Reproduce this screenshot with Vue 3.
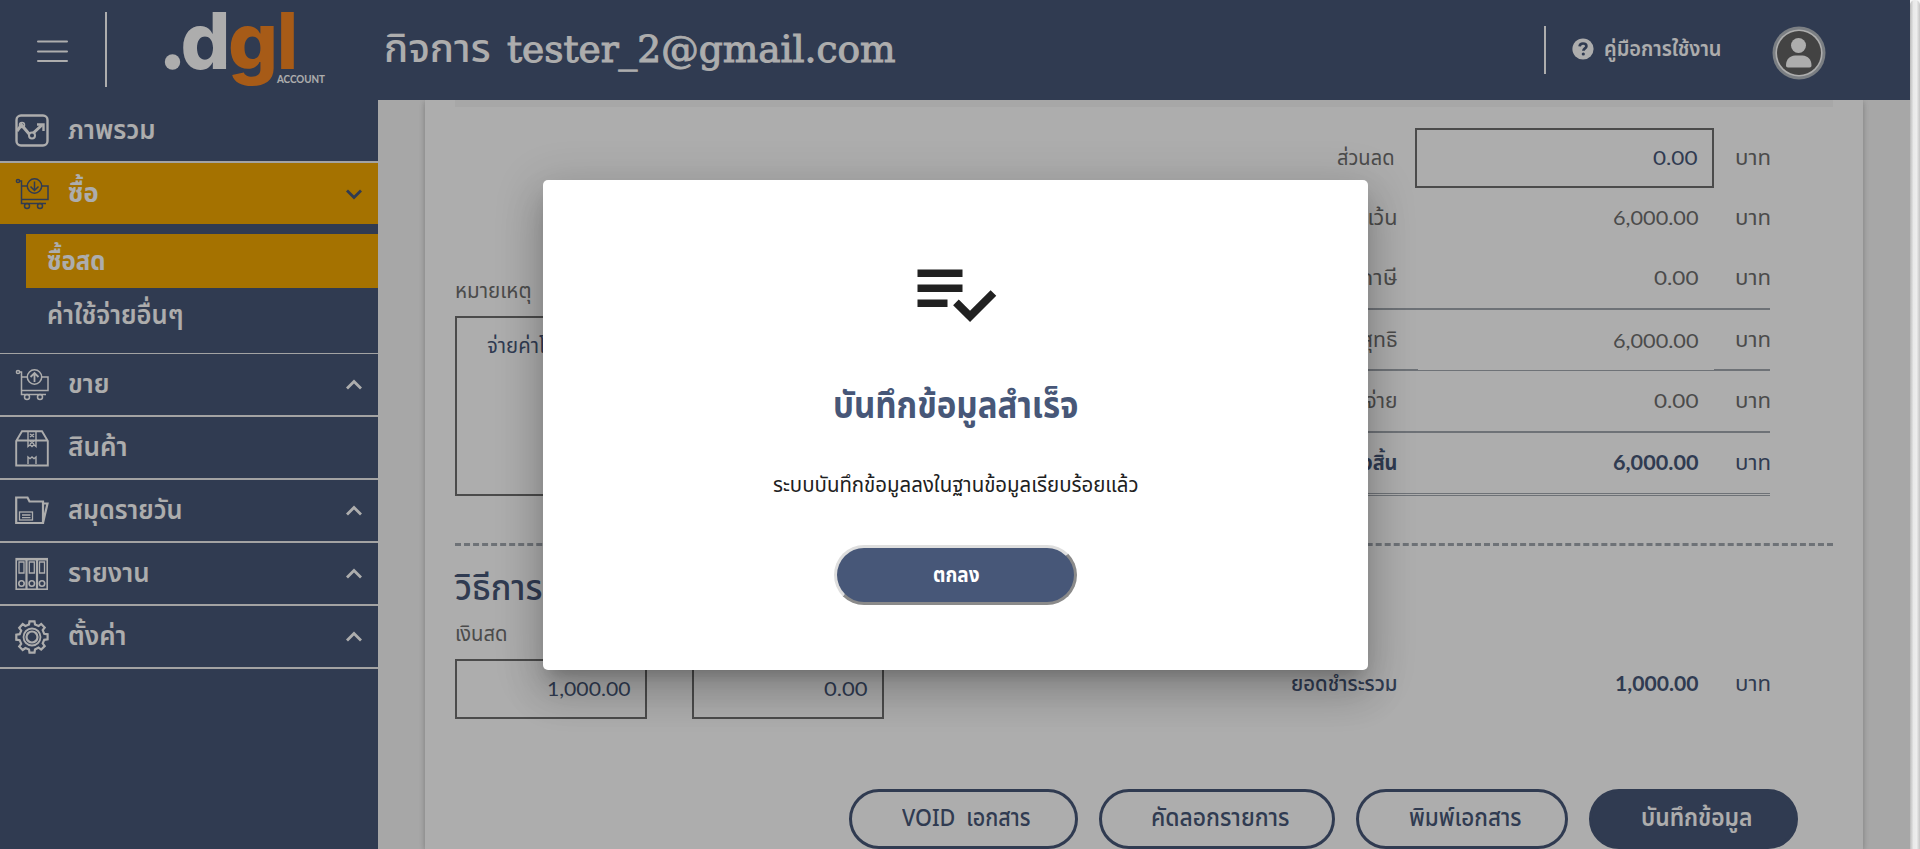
<script setup>
// Squeezes or stretches a one-line label to the width given in pixels.
const vFit = {
  mounted(el, { value }) {
    const inner = el.firstElementChild || el
    const natural = inner.getBoundingClientRect().width
    el.style.width = value + 'px'
    if (natural) inner.style.transform = `scaleX(${(value + 1.5) / natural})`
  },
}

const menu = [
  { label: 'ภาพรวม', width: 86, icon: 'chart' },
  { label: 'ซื้อ', width: 29, icon: 'buy', arrow: true, active: true, sub: [
    { label: 'ซื้อสด', width: 57, active: true },
    { label: 'ค่าใช้จ่ายอื่นๆ', width: 135 },
  ] },
  { label: 'ขาย', width: 40, icon: 'sell', arrow: true },
  { label: 'สินค้า', width: 58, icon: 'box' },
  { label: 'สมุดรายวัน', width: 113, icon: 'folder', arrow: true },
  { label: 'รายงาน', width: 80, icon: 'binder', arrow: true },
  { label: 'ตั้งค่า', width: 57, icon: 'gear', arrow: true },
]

const totals = [
  { label: 'มูลค่ายกเว้น', lw: 102, value: '6,000.00', vw: 84 },
  { label: 'มูลค่าภาษี', lw: 88, value: '0.00', vw: 43, line: 'full' },
  { label: 'ยอดสุทธิ', lw: 73, value: '6,000.00', vw: 84, line: 'step' },
  { label: 'หัก ณ ที่จ่าย', lw: 98, value: '0.00', vw: 43, line: 'full' },
  { label: 'รวมทั้งสิ้น', lw: 81, value: '6,000.00', vw: 84, line: 'double', strong: true },
]

const actions = [
  { label: 'VOID เอกสาร', width: 127, box: 'w1' },
  { label: 'คัดลอกรายการ', width: 137, box: 'w2' },
  { label: 'พิมพ์เอกสาร', width: 111, box: 'w3' },
  { label: 'บันทึกข้อมูล', width: 110, box: 'w4', solid: true },
]
</script>

<template>
  <div class="page">
    <header class="top">
      <svg class="burger" viewBox="0 0 32 24"><path d="M1 2.5H30M1 12.5H30M1 22H30" /></svg>
      <i class="bar tall"></i>
      <svg class="logo" viewBox="0 -8 170 100">
        <circle cx="12.5" cy="54" r="7.7" fill="#fff" />
        <text x="20.500" y="61" textLength="50" lengthAdjust="spacingAndGlyphs" fill="#fff">d</text>
        <text x="68" y="61" textLength="50" lengthAdjust="spacingAndGlyphs" fill="#f68622">g</text>
        <text x="117" y="61" textLength="21" lengthAdjust="spacingAndGlyphs" fill="#f68622">l</text>
        <text class="acc" x="117" y="74.5" textLength="48" lengthAdjust="spacingAndGlyphs" fill="#fff">ACCOUNT</text>
      </svg>
      <h1 class="company">
        <span class="fit" v-fit="105"><span>กิจการ</span></span>
        <span class="fit mail" v-fit="387"><span>tester_2@gmail.com</span></span>
      </h1>
      <i class="bar short"></i>
      <svg class="help" viewBox="0 0 22 22"><circle cx="11" cy="11" r="10.6" fill="#fff" /><path d="M7.6 8.4C7.8 6.4 9.2 5.500 11 5.500c2 0 3.400 1 3.400 2.700 0 2.300-3 2.200-3 4.600" fill="none" stroke="#475778" stroke-width="2.700" /><circle cx="11.300" cy="16" r="1.600" fill="#475778" /></svg>
      <span class="fit manual" v-fit="116"><span>คู่มือการใช้งาน</span></span>
      <svg class="avatar" viewBox="0 0 54 54">
        <circle cx="27" cy="27" r="26.5" fill="#b5bbc2" /><circle cx="27" cy="27" r="23.6" fill="#fff" /><circle cx="27" cy="27" r="22" fill="#636363" />
        <circle cx="26.5" cy="19.5" r="7.5" fill="#fff" /><path d="M14 39.5c0-6 3.500-9.500 9-10h7.500c5.500 .5 9 4 9 10 0 1-.7 2-2 2h-21.500c-1.300 0-2-1-2-2z" fill="#fff" />
      </svg>
    </header>

    <div class="body">
      <nav class="side">
        <div v-for="m in menu" :key="m.label" class="group" :class="{ open: m.sub }">
          <div class="item" :class="{ active: m.active }">
            <svg class="ico" viewBox="0 0 34 34">
              <g v-if="m.icon === 'chart'"><rect x="1.500" y="1.500" width="31" height="30" rx="4.500" stroke-width="2.400" /><path d="M2 17 6.500 11l9 10.500L27 11" stroke-width="3" /><path d="M22 10.500h6.500V17" stroke-width="2.400" /><circle cx="7" cy="11" r="2.500" stroke-width="1.500" /><circle cx="17" cy="21.500" r="3" class="hole" stroke-width="2" /></g>
              <g v-else-if="m.icon === 'buy' || m.icon === 'sell'" stroke-width="1.500">
                <circle cx="3" cy="4" r="1.600" /><path d="M4.500 4H6.500V26.500H31M6.500 9H12M26.500 9H33V22.500H6.500" />
                <circle cx="19.500" cy="9" r="7.200" /><path v-if="m.icon === 'buy'" d="M19.500 4.500V13M15.500 9.500l4 4 4-4" /><path v-else d="M19.500 14V5M15.500 9l4-4 4 4" stroke-width="1.800" />
                <circle cx="12" cy="29" r="2.500" /><circle cx="25" cy="29" r="2.500" />
              </g>
              <g v-else-if="m.icon === 'box'" stroke-width="1.900"><path d="M1.200 10 7 .2H27L32.800 10V34.500H1.200zM1.200 9.500H32.800" /><path d="M13 1V15.500l2-1.700 2 1.700 2-1.700 2 1.700V1M13 33V26l2 1.700 2-1.700 2 1.700 2-1.700V33M15 3l4 3M15 6l4-3M15 10l4 3M15 13l4-3" stroke-width="1.400" /></g>
              <g v-else-if="m.icon === 'folder'" stroke-width="2.200"><path d="M1.200 3.500H12.500L14.500 7.500H28V29H1.200zM28 29 32.500 9.500H28" /><rect x="4.500" y="18" width="13" height="8" stroke-width="1.300" /><path d="M7 21h8.500M7 23.700h8.500" stroke-width="1.300" /></g>
              <g v-else-if="m.icon === 'binder'" stroke-width="1.600"><rect x="1.200" y="1.700" width="31" height="30.500" /><path d="M1 2.500H33M11.500 2V32M22 2V32" stroke-width="2.200" /><path d="M4 5h5v11H4zM14.300 5h5v11h-5zM24.500 5h5v11h-5z" stroke-width="1.300" /><circle cx="6.500" cy="26.500" r="2.700" /><circle cx="16.800" cy="26.500" r="2.700" /><circle cx="27" cy="26.500" r="2.700" /></g>
              <g v-else stroke-width="2.200"><path d="M14 4.500 14.500 1.300h5l.5 3.200 3.600 1.500L26.200 4l3.500 3.500-2 2.700 1.500 3.600 3.400.5v5l-3.400.5-1.500 3.600 2 2.700-3.500 3.500-2.700-2L20 29.500l-.5 3.200h-5L14 29.500 10.400 28l-2.700 2-3.500-3.500 2-2.700-1.500-3.600-3.400-.5v-5l3.400-.5 1.500-3.600-2-2.700L7.700 4l2.700 2z" /><circle cx="17" cy="17" r="8.500" stroke-width="1.800" /><circle cx="17" cy="17" r="5.500" /></g>
            </svg>
            <span class="fit" v-fit="m.width"><span>{{ m.label }}</span></span>
            <svg v-if="m.arrow" class="chev" viewBox="0 0 18 12"><path :d="m.active ? 'M2 2.500 9 9.500 16 2.500' : 'M2 9.500 9 2.500 16 9.500'" /></svg>
          </div>
          <div v-if="m.sub" class="subs">
            <div v-for="s in m.sub" :key="s.label" class="sub" :class="{ active: s.active }"><span class="fit" v-fit="s.width"><span>{{ s.label }}</span></span></div>
          </div>
        </div>
      </nav>

      <main class="main">
        <section class="card">
          <div class="strip"></div>
          <div class="upper">
            <div class="note">
              <label class="lbl"><span class="fit" v-fit="75"><span>หมายเหตุ</span></span></label>
              <div class="area"><span class="fit" v-fit="79"><span>จ่ายค่าโทร</span></span></div>
            </div>
            <div class="sum">
              <div class="row">
                <span class="name first"><span class="fit" v-fit="56"><span>ส่วนลด</span></span></span>
                <div class="field disc"><span class="fit num" v-fit="43"><span>0.00</span></span></div>
                <span class="unit"><span class="fit" v-fit="34.5"><span>บาท</span></span></span>
              </div>
              <div v-for="t in totals" :key="t.label" class="row" :class="[t.line, { strong: t.strong }]">
                <span class="name"><span class="fit" v-fit="t.lw"><span>{{ t.label }}</span></span></span>
                <span class="val"><span class="fit num" v-fit="t.vw"><span>{{ t.value }}</span></span></span>
                <span class="unit"><span class="fit" v-fit="34.5"><span>บาท</span></span></span>
              </div>
            </div>
          </div>

          <div class="dash"></div>

          <h2 class="pay"><span class="fit" v-fit="197"><span>วิธีการชำระเงิน</span></span></h2>
          <div class="lbl cash"><span class="fit" v-fit="51"><span>เงินสด</span></span></div>
          <div class="payrow">
            <div class="field"><span class="fit num" v-fit="82"><span>1,000.00</span></span></div>
            <div class="field"><span class="fit num" v-fit="42"><span>0.00</span></span></div>
            <div class="row total">
              <span class="name"><span class="fit" v-fit="105"><span>ยอดชำระรวม</span></span></span>
              <span class="val"><span class="fit num" v-fit="82"><span>1,000.00</span></span></span>
              <span class="unit"><span class="fit" v-fit="34.5"><span>บาท</span></span></span>
            </div>
          </div>

          <div class="actions">
            <button v-for="a in actions" :key="a.label" class="act" :class="[a.box, { solid: a.solid }]"><span class="fit" v-fit="a.width"><span>{{ a.label }}</span></span></button>
          </div>
        </section>
      </main>
    </div>

    <div class="scrim">
      <div class="dialog">
        <svg class="check" viewBox="0 0 24 24"><path d="M14 10H2v2h12v-2zm0-4H2v2h12V6zM2 16h8v-2H2v2zm19.500-4.500L23 13l-6.990 7-4.510-4.500L13 14l3.010 3 5.490-5.500z" /></svg>
        <h3 class="title"><span class="fit" v-fit="244"><span>บันทึกข้อมูลสำเร็จ</span></span></h3>
        <p class="msg"><span class="fit" v-fit="364"><span>ระบบบันทึกข้อมูลลงในฐานข้อมูลเรียบร้อยแล้ว</span></span></p>
        <button class="ok"><span class="fit" v-fit="45"><span>ตกลง</span></span></button>
      </div>
    </div>
    <div class="scroll"></div>
  </div>
</template>

<style>
body { overflow: hidden; }
</style>

<style scoped>
* { box-sizing: border-box; }
.page { position: relative; width: 1920px; height: 849px; overflow: hidden; font-family: "Noto Sans Thai", "Noto Sans", "Open Sans", sans-serif; font-size: 22px; color: #6f6f6f; background: #f6f6f6; }
.fit { display: inline-block; flex: none; white-space: nowrap; text-align: left; }
.fit > span { display: inline-block; margin-left: -.5px; transform-origin: 0 50%; }
.num { font-family: Lato, "Noto Sans", sans-serif; font-size: 20px; padding-bottom: 2px; }
.num > span { margin-left: -1px; }

.top { display: flex; height: 100px; width: 1910px; background: #475778; color: #fff; }
.burger { width: 32px; height: 24px; margin: 39px 0 0 37px; fill: none; stroke: #fff; stroke-width: 2; stroke-linecap: round; }
.bar { width: 2px; background: #fff; }
.tall { height: 75px; margin: 12px 0 0 36px; }
.logo { width: 170px; height: 100px; margin: 0 0 0 53px; overflow: visible; font: 800 78px Inter, sans-serif; }
.acc { font: 700 11px Lato, sans-serif; }
.company { display: flex; gap: 18px; margin: 0 0 0 54px; height: 100px; font-size: 39px; font-weight: 500; line-height: 101px; }
.mail { font-family: "DejaVu Serif Condensed", "DejaVu Serif", serif; font-size: 37px; font-weight: 400; line-height: 100px; -webkit-text-stroke: .9px #fff; }
.short { height: 48px; margin: 26px 0 0 650px; }
.help { width: 22px; height: 22px; margin: 38px 0 0 26px; }
.manual { margin-left: 10px; line-height: 100px; font-weight: 600; }
.avatar { width: 54px; height: 54px; margin: 26px 0 0 52px; }

.body { display: flex; width: 1910px; height: 749px; }
.side { width: 378px; background: #475778; color: #fff; font-size: 27px; font-weight: 600; }
.group { border-bottom: 2px solid #f0f0f0; }
.group.open { border-bottom-width: 1px; }
.item { display: flex; align-items: center; height: 61px; padding: 0 15px; }
.item.active { font-weight: 700; }
.sub.active { font-weight: 700; }
.item.active, .sub.active { background: #f4a800; }
.ico { width: 34px; height: 34px; margin-right: 19px; overflow: visible; fill: none; stroke: #fff; }
.hole { fill: #475778; }
.active .ico, .active .chev { stroke: #475778; }
.chev { width: 18px; height: 12px; margin-left: auto; fill: none; stroke: #fff; stroke-width: 2.800; }
.subs { height: 129px; padding: 10px 0 0 26px; }
.sub { display: flex; align-items: center; height: 54px; padding-left: 21px; }

.main { width: 1532px; padding-left: 47px; background: #f6f6f6; }
.card { width: 1438px; height: 749px; padding: 0 30px; background: #fff; box-shadow: 0 3px 6px rgba(0,0,0,.16), 0 0 6px rgba(0,0,0,.1); clip-path: inset(0 -20px); }
.strip { width: 1378px; height: 7px; background: #f6f6f6; }
.upper { display: flex; justify-content: space-between; margin-top: 21px; height: 368px; }
.note { width: 420px; padding-top: 147px; }
.lbl { display: block; height: 41px; line-height: 34px; }
.area { height: 180px; border: 2px solid #6f6f6f; padding: 12px 30px; line-height: 34px; color: #475778; }
.sum { width: 520px; margin-right: 63px; }
.row { display: flex; align-items: center; height: 60px; position: relative; }
.name { display: flex; justify-content: flex-end; width: 146px; }
.name.first { width: 143px; }
.val { display: flex; justify-content: flex-end; width: 302px; }
.unit { display: flex; margin-left: 37px; }
.field { display: flex; align-items: center; justify-content: flex-end; width: 192px; height: 60px; padding-right: 15px; border: 2px solid #6f6f6f; color: #475778; }
.disc { width: 299px; margin-left: 22px; }
.disc + .unit { margin-left: 21px; }
.full { height: 62px; border-bottom: 2px solid #a2a9b0; }
.step { height: 61px; background: linear-gradient(#a2a9b0, #a2a9b0) 0 60px / 520px 1px no-repeat, linear-gradient(#a2a9b0, #a2a9b0) 0 59px / 168px 1px no-repeat, linear-gradient(#a2a9b0, #a2a9b0) 464px 59px / 56px 1px no-repeat; }
.double { height: 63px; border-bottom: 3px double #a2a9b0; }
.strong, .total { color: #475778; }
.strong .name, .strong .val, .total .val { font-weight: 700; }
.total .name { font-weight: 500; }
.dash { margin-top: 47px; border-top: 3px dashed #a2a9b0; }
.pay { height: 70px; margin: 0; padding-top: 10px; font-size: 36px; font-weight: 500; line-height: 67px; color: #475778; }
.cash { height: 43px; line-height: 38px; }
.payrow { display: flex; gap: 45px; }
.total { margin-left: 321px; margin-top: -5px; }
.actions { display: flex; gap: 21px; margin: 70px 0 0 394px; }
.act { display: flex; align-items: center; justify-content: center; height: 60px; padding: 0 0 0 5px; border: 3px solid #475778; border-radius: 30px; background: #fff; color: #475778; font: 500 24px "Noto Sans Thai", "Noto Sans", sans-serif; }
.w1 { width: 229px; word-spacing: 6px; } .w2 { width: 236px; } .w3 { width: 212px; } .w4 { width: 209px; }
.solid { background: #475778; color: #fff; font-weight: 600; }

.scrim { position: absolute; inset: 0 10px 0 0; background: rgba(0,0,0,.32); }
.dialog { display: flex; flex-direction: column; align-items: center; width: 825px; height: 490px; margin: 180px 0 0 543px; background: #fff; border-radius: 5px; box-shadow: 0 11px 15px -7px rgba(0,0,0,.2), 0 24px 38px 3px rgba(0,0,0,.14), 0 9px 46px 8px rgba(0,0,0,.12); }
.check { width: 90px; height: 90px; margin: 66.500px 1px 0 0; fill: #212121; }
.title { margin: 45.500px 1px 0 0; height: 50px; line-height: 50px; font-size: 37px; font-weight: 700; color: #475778; }
.msg { margin: 34px 1px 0 0; height: 40px; line-height: 40px; color: #212121; }
.ok { width: 243px; height: 60px; margin-top: 39px; border: 3px outset #dedede; border-radius: 30px; background: #475778; color: #fff; font: 700 22px "Noto Sans Thai", "Noto Sans", sans-serif; }
.scroll { position: absolute; top: 0; right: 0; width: 10px; height: 849px; border-radius: 5px 5px 0 0; background: linear-gradient(90deg, #bbb, #e9e9e9 35%, #ededed 65%, #c4c4c4); }
</style>
